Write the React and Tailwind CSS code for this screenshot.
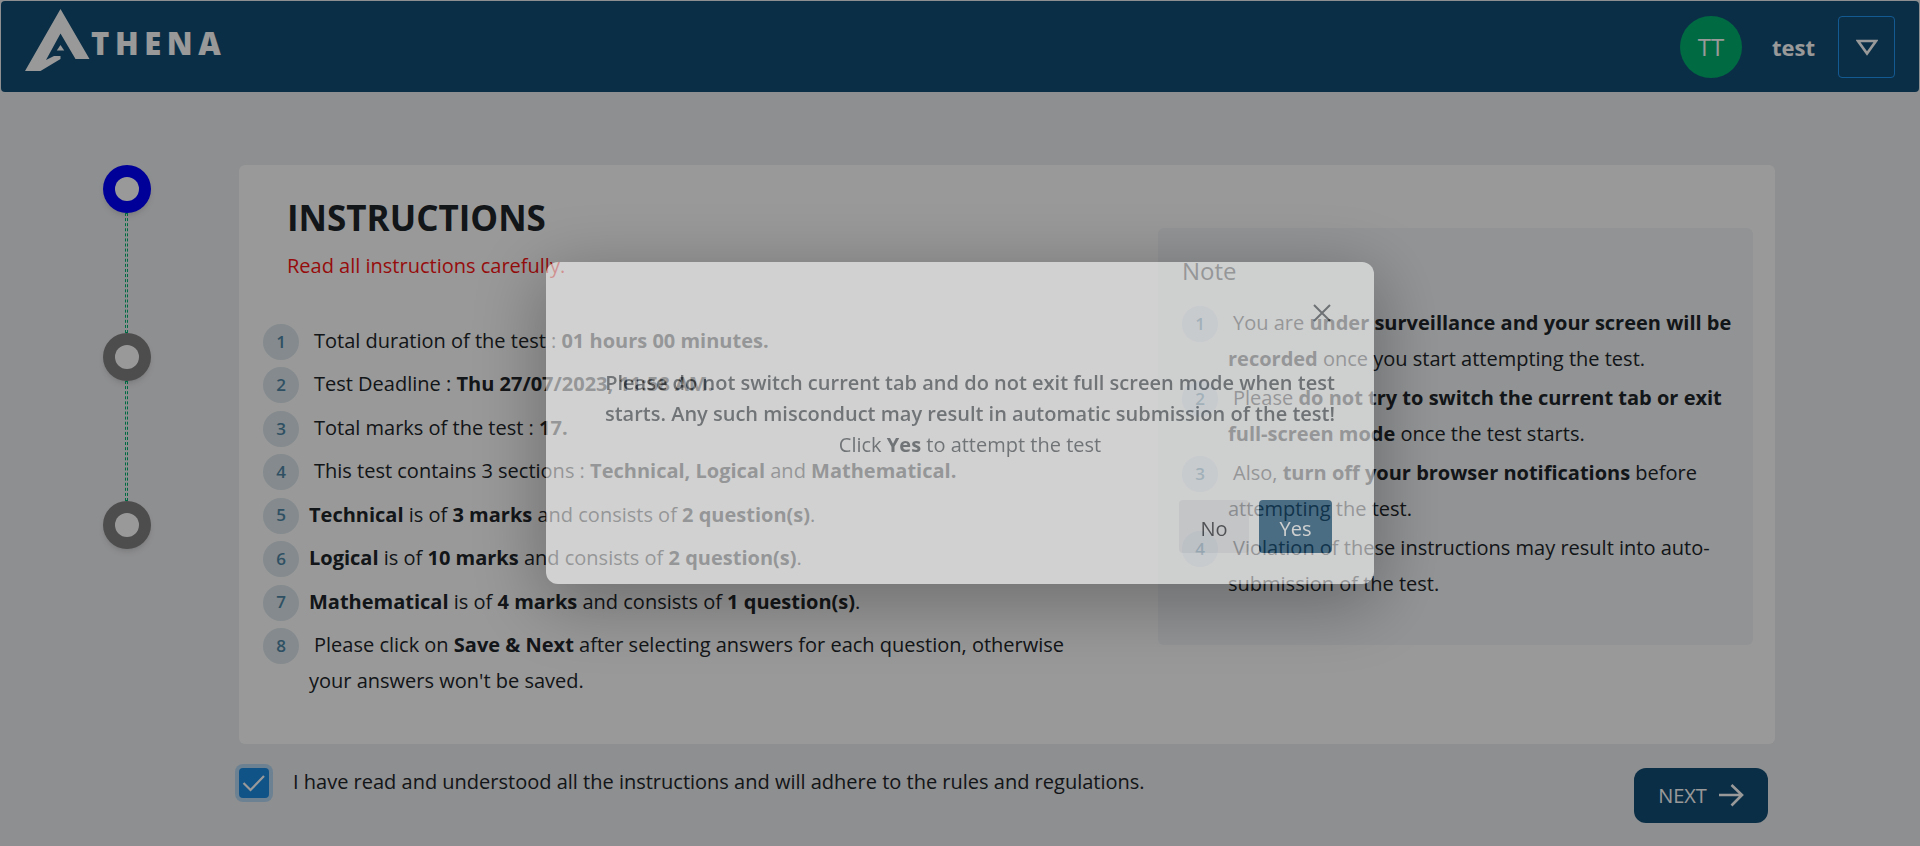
import React from "react";

const instructions = [
  { indent: true, body: <>Total duration of the test : <b>01 hours 00 minutes.</b></> },
  { indent: true, body: <>Test Deadline : <b>Thu 27/07/2023, 11:58 AM.</b></> },
  { indent: true, body: <>Total marks of the test : <b>17.</b></> },
  { indent: true, body: <>This test contains 3 sections : <b>Technical, Logical</b> and <b>Mathematical.</b></> },
  { indent: false, body: <><b>Technical</b> is of <b>3 marks</b> and consists of <b>2 question(s)</b>.</> },
  { indent: false, body: <><b>Logical</b> is of <b>10 marks</b> and consists of <b>2 question(s)</b>.</> },
  { indent: false, body: <><b>Mathematical</b> is of <b>4 marks</b> and consists of <b>1 question(s)</b>.</> },
  { indent: true, body: <>Please click on <b>Save &amp; Next</b> after selecting answers for each question, otherwise your answers won't be saved.</> },
];

const notes = [
  <>You are <b>under surveillance and your screen will be recorded</b> once you start attempting the test.</>,
  <>Please <b>do not try to switch the current tab or exit full-screen mode</b> once the test starts.</>,
  <>Also, <b>turn off your browser notifications</b> before attempting the test.</>,
  <>Violation of these instructions may result into auto-submission of the test.</>,
];

function Logo() {
  return (
    <a href="#home" aria-label="Athena" className="flex items-start self-start pt-[7px] text-white">
      <svg width="65" height="64" viewBox="0 0 65 64" aria-hidden="true" fill="currentColor">
        <path d="M35.500 1L64.500 51H50.500L35.500 25.500L21 52L29 48H35.500V51L15.500 63H0Z" />
        <path d="M35.500 37L39.200 42.500H31.800Z" />
      </svg>
      <span className="pl-px pt-[17px] font-['Open_Sans',sans-serif] text-[31px] font-extrabold leading-[36px] tracking-[0.18em]">THENA</span>
    </a>
  );
}

function Header() {
  return (
    <header className="m-px flex h-[91px] items-center justify-between rounded bg-[#124e76] pl-6 pr-6 text-white">
      <Logo />
      <div className="flex items-center">
        <span className="flex size-[62px] items-center justify-center rounded-full bg-[#00b26e] text-[24px]">TT</span>
        <span className="ml-[30px] pt-px text-[22px] font-bold">test</span>
        <button type="button" aria-label="Open account menu" className="ml-[23px] flex h-[62px] w-[57px] items-center justify-center rounded border border-[#2196f3]">
          <svg width="22" height="18" viewBox="0 0 22 18" fill="none" stroke="currentColor" strokeWidth="2.600" aria-hidden="true">
            <path d="M2 3H20L11 15.500Z" />
          </svg>
        </button>
      </div>
    </header>
  );
}

function Stepper() {
  return (
    <ol className="flex flex-col items-center" aria-label="Progress">
      {[true, false, false].map((active, i) => (
        <li key={i} className="flex flex-col">
          {i > 0 && <span className="ml-[22px] h-[120px] w-[3px] border border-dashed border-[#00b26e]" />}
          <span className={`flex size-12 items-center justify-center rounded-full shadow-md ${active ? "bg-[#0000ff]" : "bg-[#808080]"}`}>
            <span className="size-6 rounded-full bg-white" />
          </span>
        </li>
      ))}
    </ol>
  );
}

function NumberedItem({ number, tone, indent, children }) {
  return (
    <li className="flex items-start">
      <span className={`flex size-9 shrink-0 items-center justify-center rounded-full pb-px text-[17px] font-semibold text-[#4f86a6] ${tone}`}>
        {number}
      </span>
      <p className={`-mt-px ml-[10px] leading-9 ${indent ? "indent-[5px]" : ""}`}>{children}</p>
    </li>
  );
}

function InstructionsCard() {
  return (
    <section className="flex items-start justify-between rounded-md bg-white pr-[22px]">
      <div className="w-[56%] pb-[45px] pl-6 pt-[31px]">
        <h1 className="pl-6 text-[35px] font-bold leading-[44px]">INSTRUCTIONS</h1>
        <p className="pl-6 pt-2 leading-9 text-[#fa1414]">Read all instructions carefully.</p>
        <ol className="mt-10 flex min-h-[375px] flex-col justify-between">
          {instructions.map((item, i) => (
            <NumberedItem key={i} number={i + 1} tone="bg-[#dce7ec]" indent={item.indent}>
              {item.body}
            </NumberedItem>
          ))}
        </ol>
      </div>
      <aside className="mt-[63px] w-[595px] rounded-md bg-[#f3f6f8] pb-[43px] pl-6 pr-3 pt-[25px]">
        <h2 className="text-[24px] font-medium leading-9">Note</h2>
        <ol className="mt-[17px] flex flex-col gap-1">
          {notes.map((note, i) => (
            <NumberedItem key={i} number={i + 1} tone="bg-[#d9e7f4]" indent>
              {note}
            </NumberedItem>
          ))}
        </ol>
      </aside>
    </section>
  );
}

function Agreement() {
  return (
    <div className="flex items-start justify-between pr-[7px] pt-6">
      <div className="flex items-start">
        <span className="relative flex size-[30px]">
          <input
            id="agree"
            type="checkbox"
            defaultChecked
            className="size-[30px] appearance-none rounded bg-[#1a8ae2] ring-4 ring-[#b4d8f4]"
          />
          <svg className="pointer-events-none absolute inset-0" width="30" height="30" viewBox="0 0 30 30" fill="none" stroke="#fff" strokeWidth="2.200" aria-hidden="true">
            <path d="M4.500 15L11.500 22L25 8" />
          </svg>
        </span>
        <label htmlFor="agree" className="pl-6 leading-[28px]">
          I have read and understood all the instructions and will adhere to the rules and regulations.
        </label>
      </div>
      <button type="button" className="flex h-[55px] w-[134px] items-center justify-center gap-3 rounded-xl bg-[#124e76] text-white">
        <span>NEXT</span>
        <svg width="25" height="23" viewBox="0 0 25 23" fill="none" stroke="currentColor" strokeWidth="2.600" aria-hidden="true">
          <path d="M0 11H23M12.500 1L23 11L12.500 21.500" />
        </svg>
      </button>
    </div>
  );
}

function ConfirmDialog() {
  return (
    <div className="fixed inset-0 flex items-center justify-center bg-black/40">
      <div
        role="dialog"
        aria-modal="true"
        aria-label="Start test"
        className="flex w-[828px] flex-col rounded-xl bg-white pb-[31px] pl-[50px] pr-[30px] pt-[37px] opacity-55 shadow-[0_16px_70px_6px_rgba(0,0,0,0.5)]"
      >
        <button type="button" aria-label="Close" className="mr-2 flex size-7 items-center justify-center self-end">
          <svg width="18" height="18" viewBox="0 0 18 18" fill="none" stroke="#50565b" strokeWidth="2" aria-hidden="true">
            <path d="M1 1L17 17M17 1L1 17" />
          </svg>
        </button>
        <p className="pt-10 text-center leading-[31px] text-[#50565b]">
          <b className="font-semibold">Please do not switch current tab and do not exit full screen mode when test starts. Any such misconduct may result in automatic submission of the test!</b>
          <br />
          Click <b>Yes</b> to attempt the test
        </p>
        <div className="flex justify-end gap-[10px] pr-3 pt-10">
          <button type="button" className="h-[53px] w-[70px] rounded bg-[#ecedf0] pt-1 text-[#1b1b20]">No</button>
          <button type="button" className="h-[53px] w-[73px] rounded bg-[#124e76] pt-1 text-white">Yes</button>
        </div>
      </div>
    </div>
  );
}

export default function App() {
  return (
    <div className="flow-root min-h-screen bg-[#edeef1] font-['Open_Sans',sans-serif] text-[20px] text-[#212529]">
      <Header />
      <main className="grid grid-cols-[239px_1fr] pr-[145px] pt-[72px]">
        <div className="flex flex-col items-start pl-[103px]">
          <Stepper />
        </div>
        <div>
          <InstructionsCard />
          <Agreement />
        </div>
      </main>
      <ConfirmDialog />
    </div>
  );
}
